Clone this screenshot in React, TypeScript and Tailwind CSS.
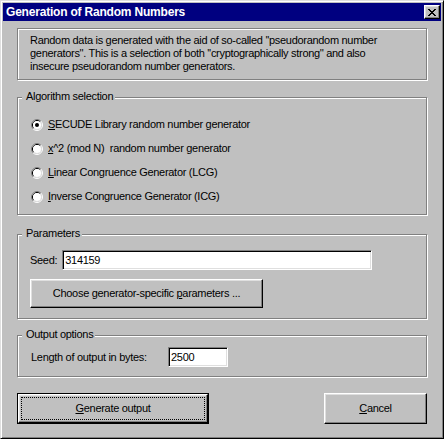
import React from 'react';

function Radio({ checked }: { checked?: boolean }) {
    return (
        <svg width="12" height="12" viewBox="0 0 12 12" className="shrink-0">
            <path d="M2.11 9.89 A5.5 5.5 0 0 1 9.89 2.11" fill="none" stroke="#808080" />
            <path d="M9.89 2.11 A5.5 5.5 0 0 1 2.11 9.89" fill="none" stroke="#ffffff" />
            <path d="M2.82 9.18 A4.5 4.5 0 0 1 9.18 2.82" fill="none" stroke="#000000" />
            <path d="M9.18 2.82 A4.5 4.5 0 0 1 2.82 9.18" fill="none" stroke="#dfdfdf" />
            <circle cx="6" cy="6" r="4" fill="#ffffff" />
            {checked && <circle cx="6" cy="6" r="2" fill="#000000" />}
        </svg>
    );
}

function GroupBox({ title, className, children }: { title: string; className?: string; children: React.ReactNode }) {
    return (
        <div className={`relative border border-[#808080] shadow-[1px_1px_0_#ffffff,inset_1px_1px_0_#ffffff] ${className ?? ''}`}>
            <span className="absolute -top-[8px] left-[4px] bg-[#c0c0c0] pl-[4px] pr-[2px] leading-[13px]">{title}</span>
            {children}
        </div>
    );
}

const raised = 'border border-t-white border-l-white border-r-black border-b-black shadow-[inset_-1px_-1px_0_#808080,inset_1px_1px_0_#dfdfdf]';
const sunken = 'border border-t-[#808080] border-l-[#808080] border-r-white border-b-white shadow-[inset_1px_1px_0_#000000,inset_-1px_-1px_0_#dfdfdf] bg-white';

function CloseGlyph() {
    // classic 8x7 pixel X
    const rows = ['XX....XX', '.XX..XX.', '..XXXX..', '...XX...', '..XXXX..', '.XX..XX.', 'XX....XX'];
    return (
        <svg width="8" height="7" viewBox="0 0 8 7" shapeRendering="crispEdges">
            {rows.map((r, y) =>
                r.split('').map((c, x) => (c === 'X' ? <rect key={`${x}-${y}`} x={x} y={y} width="1" height="1" fill="#000" /> : null))
            )}
        </svg>
    );
}

export default function App() {
    const radios = [
        { key: 'S', rest: 'ECUDE Library random number generator', checked: true },
        { key: 'x', rest: '^2 (mod N)  random number generator' },
        { key: 'L', rest: 'inear Congruence Generator (LCG)' },
        { key: 'I', rest: 'nverse Congruence Generator (ICG)' },
    ];

    return (
        <div className="w-[444px] h-[439px] bg-[#c0c0c0] border border-t-[#dfdfdf] border-l-[#dfdfdf] border-r-black border-b-black shadow-[inset_1px_1px_0_#ffffff,inset_-1px_-1px_0_#808080] p-[2px] flex flex-col font-['Liberation_Sans',Arial,sans-serif] text-[11px] leading-[13px] tracking-[-0.3px] text-black">
            {/* title bar */}
            <div className="h-[18px] bg-[#000080] flex items-center justify-between pl-[3px] pr-[1px]">
                <span className="text-white font-bold text-[12px] tracking-[-0.2px]">Generation of Random Numbers</span>
                <div className={`w-[16px] h-[14px] bg-[#c0c0c0] flex items-center justify-center ${raised}`}>
                    <CloseGlyph />
                </div>
            </div>

            <div className="flex flex-col px-[14px]">
                {/* description */}
                <div className="mt-[7px] h-[52px] border border-[#808080] shadow-[1px_1px_0_#ffffff,inset_1px_1px_0_#ffffff] pl-[12px] pt-[5px]">
                    Random data is generated with the aid of so-called ''pseudorandom number
                    <br />
                    generators''. This is a selection of both ''cryptographically strong'' and also
                    <br />
                    insecure pseudorandom number generators.
                </div>

                <GroupBox title="Algorithm selection" className="mt-[17px] h-[118px] pl-[13px] pt-[20px]">
                    <div className="flex flex-col gap-[11px]">
                        {radios.map((r) => (
                            <div key={r.key} className="flex items-center gap-[5px] h-[13px]">
                                <Radio checked={r.checked} />
                                <span className="whitespace-pre">
                                    <u>{r.key}</u>
                                    {r.rest}
                                </span>
                            </div>
                        ))}
                    </div>
                </GroupBox>

                <GroupBox title="Parameters" className="mt-[19px] h-[85px] pl-[12px] pt-[15px]">
                    <div className="flex items-center gap-[5px]">
                        <span>Seed:</span>
                        <div className={`w-[310px] h-[20px] flex items-center pl-[2px] ${sunken}`}>314159</div>
                    </div>
                    <button className={`mt-[9px] w-[233px] h-[29px] bg-[#c0c0c0] flex items-center justify-center ${raised}`}>
                        <span>
                            Choose generator-specific <u>p</u>arameters ...
                        </span>
                    </button>
                </GroupBox>

                <GroupBox title="Output options" className="mt-[16px] h-[42px] pl-[13px] pt-[11px]">
                    <div className="flex items-center">
                        <span className="w-[137px]">Length of output in bytes:</span>
                        <div className={`w-[60px] h-[20px] flex items-center pl-[2px] ${sunken}`}>2500</div>
                    </div>
                </GroupBox>

                <div className="mt-[16px] flex justify-between">
                    <div className="w-[192px] h-[31px] border border-black flex">
                        <button className={`flex-1 bg-[#c0c0c0] p-[2px] flex ${raised}`}>
                            <span className="flex-1 border border-dotted border-black flex items-center justify-center">
                                <span>
                                    <u>G</u>enerate output
                                </span>
                            </span>
                        </button>
                    </div>
                    <button className={`w-[103px] h-[31px] bg-[#c0c0c0] flex items-center justify-center ${raised}`}>
                        <span>
                            <u>C</u>ancel
                        </span>
                    </button>
                </div>
            </div>
        </div>
    );
}
